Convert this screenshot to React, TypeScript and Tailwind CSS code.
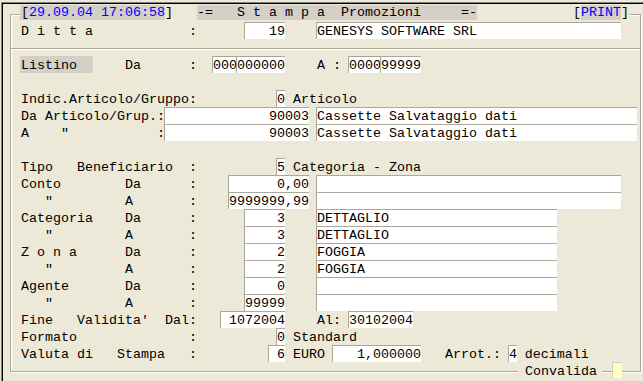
import type { ReactNode } from "react";

const line = "border-[#ACA899]";

function Field({ w, children, left = false }: { w: string; children?: ReactNode; left?: boolean }) {
  return (
    <span
      className={`box-content -ml-px overflow-hidden border-l border-t ${line} bg-white leading-[17px] ${w} ${
        left ? "text-left" : "text-right"
      }`}
    >
      {children}
    </span>
  );
}

function Row({ children }: { children?: ReactNode }) {
  return <div className="flex h-[17px] whitespace-pre pl-[10px] leading-[19px]">{children}</div>;
}

// label column for the "  A" continuation rows
const contA = '   "         A       :';

export default function App() {
  return (
    <div className="h-[381px] w-[643px] overflow-hidden bg-[#ECE9D8] font-['Liberation_Mono','Courier_New',monospace] text-[13.333px] text-black">
      <div className="ml-px mt-[2px] h-[379px] border-l border-t border-[#808080]">
        <div className="h-full border-l border-t border-black pl-[7px] pt-[10px]">
          <div
            className={`relative h-[358px] w-[631px] border ${line} shadow-[1px_1px_0_#fff,inset_1px_1px_0_#fff]`}
          >
            {/* title over the top border */}
            <div className="absolute left-[9px] top-[-10px] flex h-[15px] w-[610px] whitespace-pre bg-[#ECE9D8] leading-[16px]">
              <span className="bg-[#D4D0C8] pl-px">
                [<span className="text-[#0000FF]">29.09.04 17:06:58</span>
              </span>
              <span>{"]   "}</span>
              <span className="bg-[#D4D0C8]">{"-=   S t a m p a  Promozioni     =-"}</span>
              <span>{"            ["}</span>
              <span className="bg-[#D4D0C8] text-[#0000FF]">PRINT</span>
              <span>]</span>
            </div>

            <div className="mt-[7px]">
              <Row>
                <span>{"D i t t a            :      "}</span>
                <Field w="w-[5ch]">19</Field>
                <span>{"    "}</span>
                <Field w="w-[38ch]" left>
                  GENESYS SOFTWARE SRL
                </Field>
              </Row>
            </div>

            <div className={`mt-[9px] h-[2px] border-t ${line} bg-white`} />

            <div className="mt-[6px]">
              <Row>
                <span className="-ml-px bg-[#D4D0C8] pl-px">{"Listino  "}</span>
                <span>{"    Da      :  "}</span>
                <Field w="w-[9ch]" left>
                  000<span className={`-ml-px inline-block border-l ${line}`}>000000</span>
                </Field>
                <span>{"    A : "}</span>
                <Field w="w-[9ch]" left>
                  0000<span className={`-ml-px inline-block border-l ${line}`}>99999</span>
                </Field>
              </Row>
              <div className="h-[17px]" />
              <Row>
                <span>{"Indic.Articolo/Gruppo:          "}</span>
                <Field w="w-[1ch]">0</Field>
                <span>{" Articolo"}</span>
              </Row>
              <Row>
                <span>{"Da Articolo/Grup.:"}</span>
                <Field w="w-[18ch]">90003</Field>
                <span>{" "}</span>
                <Field w="w-[40ch]" left>
                  Cassette Salvataggio dati
                </Field>
              </Row>
              <Row>
                <span>{'A    "           :'}</span>
                <Field w="w-[18ch]">90003</Field>
                <span>{" "}</span>
                <Field w="w-[40ch]" left>
                  Cassette Salvataggio dati
                </Field>
              </Row>
              <div className="h-[17px]" />
              <Row>
                <span>{"Tipo   Beneficiario  :          "}</span>
                <Field w="w-[1ch]">5</Field>
                <span>{" Categoria - Zona"}</span>
              </Row>
              <Row>
                <span>{"Conto        Da      :    "}</span>
                <Field w="w-[10ch]">0,00</Field>
                <span>{" "}</span>
                <Field w="w-[38ch]" left />
              </Row>
              <Row>
                <span>{contA + "    "}</span>
                <Field w="w-[10ch]">9999999,99</Field>
                <span>{" "}</span>
                <Field w="w-[38ch]" left />
              </Row>
              <Row>
                <span>{"Categoria    Da      :      "}</span>
                <Field w="w-[5ch]">3</Field>
                <span>{"    "}</span>
                <Field w="w-[30ch]" left>
                  DETTAGLIO
                </Field>
              </Row>
              <Row>
                <span>{contA + "      "}</span>
                <Field w="w-[5ch]">3</Field>
                <span>{"    "}</span>
                <Field w="w-[30ch]" left>
                  DETTAGLIO
                </Field>
              </Row>
              <Row>
                <span>{"Z o n a      Da      :      "}</span>
                <Field w="w-[5ch]">2</Field>
                <span>{"    "}</span>
                <Field w="w-[30ch]" left>
                  FOGGIA
                </Field>
              </Row>
              <Row>
                <span>{contA + "      "}</span>
                <Field w="w-[5ch]">2</Field>
                <span>{"    "}</span>
                <Field w="w-[30ch]" left>
                  FOGGIA
                </Field>
              </Row>
              <Row>
                <span>{"Agente       Da      :      "}</span>
                <Field w="w-[5ch]">0</Field>
                <span>{"    "}</span>
                <Field w="w-[30ch]" left />
              </Row>
              <Row>
                <span>{contA + "      "}</span>
                <Field w="w-[5ch]">99999</Field>
                <span>{"    "}</span>
                <Field w="w-[30ch]" left />
              </Row>
              <Row>
                <span>{"Fine   Validita'  Dal:   "}</span>
                <Field w="w-[8ch]">1072004</Field>
                <span>{"    Al: "}</span>
                <Field w="w-[8ch]" left>
                  30102004
                </Field>
              </Row>
              <Row>
                <span>{"Formato              :          "}</span>
                <Field w="w-[1ch]">0</Field>
                <span>{" Standard"}</span>
              </Row>
              <Row>
                <span>{"Valuta di   Stampa   :         "}</span>
                <Field w="w-[2ch]">6</Field>
                <span>{" EURO "}</span>
                <Field w="w-[11ch]">1,000000</Field>
                <span>{"   Arrot.: "}</span>
                <Field w="w-[1ch]">4</Field>
                <span>{" decimali"}</span>
              </Row>
            </div>

            {/* label and flag sitting on the bottom border */}
            <div className="absolute left-[507px] top-[348px] h-[17px] w-[84px] whitespace-pre bg-[#ECE9D8] pl-[7px] leading-[18px]">
              Convalida
            </div>
            <div className="absolute left-[601px] top-[347px] h-[16px] w-[10px] border-l border-t border-[#D0CEBE] bg-[#FFFFC0]" />
          </div>
        </div>
      </div>
    </div>
  );
}
